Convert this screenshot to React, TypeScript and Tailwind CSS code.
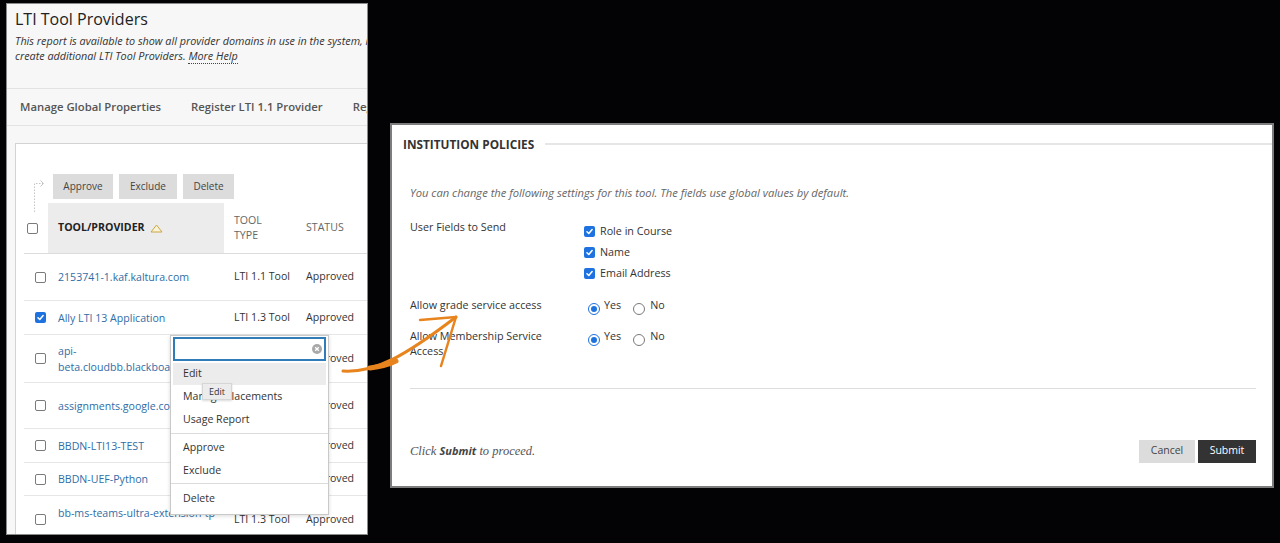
import React from "react";

type Row = {
  name: string;
  type: string;
  h: string;
  checked?: boolean;
  top?: boolean;
};

const rows: Row[] = [
  { name: "2153741-1.kaf.kaltura.com", type: "LTI 1.1 Tool", h: "h-[47px]" },
  { name: "Ally LTI 13 Application", type: "LTI 1.3 Tool", h: "h-[34px]", checked: true },
  { name: "api-beta.cloudbb.blackboard.com", type: "LTI 1.3 Tool", h: "h-[48px]" },
  { name: "assignments.google.com", type: "LTI 1.3 Tool", h: "h-[46px]" },
  { name: "BBDN-LTI13-TEST", type: "LTI 1.3 Tool", h: "h-[34px]" },
  { name: "BBDN-UEF-Python", type: "LTI 1.3 Tool", h: "h-[33px]" },
  { name: "bb-ms-teams-ultra-extension-tp", type: "LTI 1.3 Tool", h: "h-[48px]", top: true },
];

function Check({ checked = false }: { checked?: boolean }) {
  if (checked) {
    return (
      <span className="flex h-[11px] w-[11px] items-center justify-center rounded-[2px] bg-[#1d72e0]">
        <svg viewBox="0 0 10 10" className="h-[9px] w-[9px]">
          <path d="M2.2 5.3 4.2 7.2 7.9 2.9" fill="none" stroke="white" strokeWidth="1.7" strokeLinecap="round" strokeLinejoin="round" />
        </svg>
      </span>
    );
  }
  return <span className="block h-[11px] w-[11px] rounded-[2px] border border-[#7a7a7a] bg-white" />;
}

function Radio({ on = false }: { on?: boolean }) {
  return on ? (
    <span className="flex h-[12px] w-[12px] items-center justify-center rounded-full border-[1.5px] border-[#1d72e0] bg-white">
      <span className="h-[6px] w-[6px] rounded-full bg-[#1d72e0]" />
    </span>
  ) : (
    <span className="block h-[12px] w-[12px] rounded-full border border-[#7a7a7a] bg-white" />
  );
}

function YesNo() {
  return (
    <div className="flex items-start leading-[15px]">
      <span className="ml-[4px] mt-[5px]">
        <Radio on />
      </span>
      <span className="ml-[4px]">Yes</span>
      <span className="ml-[12px] mt-[5px]">
        <Radio />
      </span>
      <span className="ml-[5px]">No</span>
    </div>
  );
}

function ProvidersPanel() {
  return (
    <div className="ml-[6px] mt-[3px] h-[532px] w-[362px] shrink-0 overflow-hidden border border-[#8a8a8a] bg-[#f7f7f7]">
      <div className="h-[84px] pl-[8px] pt-[4px]">
        <h1 className="whitespace-nowrap text-[16px] leading-[22px] text-[#222]">LTI Tool Providers</h1>
        <div className="mt-[3px] whitespace-nowrap text-[10.8px] italic leading-[15px] text-[#333]">
          <p>This report is available to show all provider domains in use in the system, including those added by instructors. You can also</p>
          <p>
            create additional LTI Tool Providers.{" "}
            <span className="border-b border-dotted border-[#444]">More Help</span>
          </p>
        </div>
      </div>

      <div className="flex h-[38px] items-center gap-[30px] whitespace-nowrap border-y border-[#e3e3e3] pl-[13px] text-[11.3px] font-semibold text-[#555]">
        <span>Manage Global Properties</span>
        <span>Register LTI 1.1 Provider</span>
        <span>Register LTI 1.3/Advantage Tool</span>
      </div>

      <div className="ml-[8px] mt-[17px] h-[420px] w-[420px] border border-[#d3d3d3] bg-white text-[10.6px] text-[#333]">
        <div className="mt-[30px] flex h-[25px] items-start pl-[16px]">
          <svg viewBox="0 0 14 34" className="mr-[7px] mt-[5px] h-[34px] w-[14px] shrink-0">
            <path d="M2.5 33V4.5H11" fill="none" stroke="#c4c4c4" strokeWidth="1" strokeDasharray="1.5 1.5" />
            <path d="M8.5 1.5 11.5 4.5 8.5 7.5" fill="none" stroke="#c4c4c4" strokeWidth="1" />
          </svg>
          <div className="flex gap-[6px] text-[10px] text-[#444]">
            <button className="h-[25px] w-[60px] bg-[#dcdcdc]">Approve</button>
            <button className="h-[25px] w-[58px] bg-[#dcdcdc]">Exclude</button>
            <button className="h-[25px] w-[51px] bg-[#dcdcdc]">Delete</button>
          </div>
        </div>

        <div className="ml-[8px] mt-[4px] flex h-[51px] items-stretch border-b border-[#dcdcdc] text-[10.6px]">
          <div className="flex w-[24px] items-center pl-[3px]">
            <Check />
          </div>
          <div className="flex w-[176px] items-center gap-[5px] bg-[#ececec] pl-[10px] font-bold text-[#222]">
            TOOL/PROVIDER
            <svg viewBox="0 0 13 9" className="h-[9px] w-[13px]">
              <path d="M6.5 1 12 8H1Z" fill="#fbf3d6" stroke="#c9a548" strokeWidth="1" strokeLinejoin="round" />
            </svg>
          </div>
          <div className="flex w-[72px] items-center pl-[10px] leading-[15px] text-[#666]">
            TOOL
            <br />
            TYPE
          </div>
          <div className="flex items-center pl-[10px] text-[#666]">STATUS</div>
        </div>

        {rows.map((r) => (
          <div key={r.name} className={`ml-[8px] flex items-center border-b border-[#e6e6e6] ${r.h}`}>
            <div className="w-[24px] pl-[11px]">
              <Check checked={r.checked} />
            </div>
            <div
              className={`w-[176px] break-words px-[10px] leading-[16px] text-[#2f6da6] ${
                r.top ? "self-start whitespace-nowrap pt-[9px]" : ""
              }`}
            >
              {r.name}
            </div>
            <div className="w-[72px] whitespace-nowrap pl-[10px]">{r.type}</div>
            <div className="pl-[10px]">Approved</div>
          </div>
        ))}
      </div>
    </div>
  );
}

function PoliciesPanel() {
  return (
    <div className="ml-[22px] mt-[123px] h-[365px] w-[884px] shrink-0 border-2 border-[#7d7d7d] bg-white text-[10.75px] text-[#333]">
      <div className="flex items-center pl-[11px] pt-[11px]">
        <h2 className="text-[11.8px] font-bold leading-[16px] text-[#333]">INSTITUTION POLICIES</h2>
        <div className="ml-[11px] h-[2px] flex-1 bg-[#e6e6e6]" />
      </div>

      <div className="pl-[18px] pr-[16px]">
        <p className="mt-[33px] text-[11.2px] italic leading-[16px] text-[#666]">
          You can change the following settings for this tool. The fields use global values by default.
        </p>

        <div className="mt-[18px] flex">
          <div className="w-[174px] leading-[16px]">User Fields to Send</div>
          <div className="flex flex-col pt-[1.5px]">
            {["Role in Course", "Name", "Email Address"].map((f) => (
              <label key={f} className="flex h-[21px] items-center gap-[5px]">
                <Check checked />
                {f}
              </label>
            ))}
          </div>
        </div>

        <div className="mt-[14px] flex">
          <div className="w-[174px] leading-[15px]">Allow grade service access</div>
          <YesNo />
        </div>

        <div className="mt-[14px] flex">
          <div className="w-[174px] pr-[30px] leading-[15px]">Allow Membership Service Access</div>
          <YesNo />
        </div>

        <div className="mt-[29px] h-[1px] bg-[#dddddd]" />

        <div className="mt-[51px] flex items-center justify-between">
          <p className="font-['Liberation_Serif',serif] text-[12.5px] italic text-[#555]">
            Click <span className="font-['Open_Sans',sans-serif] text-[11px] font-bold text-[#444]">Submit</span> to proceed.
          </p>
          <div className="flex gap-[3px] text-[10.5px]">
            <button className="h-[23px] w-[56px] bg-[#dcdcdc] text-[#444]">Cancel</button>
            <button className="h-[23px] w-[58px] bg-[#333333] text-white">Submit</button>
          </div>
        </div>
      </div>
    </div>
  );
}

export default function App() {
  return (
    <div className="relative flex h-[543px] w-[1280px] items-start overflow-hidden bg-[#030205] font-['Open_Sans',sans-serif]">
      <ProvidersPanel />
      <PoliciesPanel />

      {/* action menu opened on a row */}
      <div className="absolute left-[170px] top-[335px] w-[159px] border border-[#c9c9c9] bg-white pb-[4px] text-[10.6px] text-[#333] shadow-[0_1px_4px_rgba(0,0,0,0.15)]">
        <div className="px-[2px] pt-[1px]">
          <div className="flex h-[24px] items-center justify-end border-2 border-[#2f7cb8] pr-[2px]">
            <svg viewBox="0 0 10 10" className="h-[10px] w-[10px]">
              <circle cx="5" cy="5" r="5" fill="#a9a9a9" />
              <path d="M3.2 3.2 6.8 6.8M6.8 3.2 3.2 6.8" stroke="white" strokeWidth="1.3" />
            </svg>
          </div>
        </div>
        <div className="px-[2px] pt-[2px]">
          <div className="flex h-[22px] items-center bg-[#ececec] pl-[10px]">Edit</div>
          <div className="flex h-[23px] items-center pl-[10px]">Manage Placements</div>
          <div className="flex h-[23px] items-center pl-[10px]">Usage Report</div>
        </div>
        <div className="mt-[2px] border-t border-[#dcdcdc] px-[2px] pt-[2px]">
          <div className="flex h-[23px] items-center pl-[10px]">Approve</div>
          <div className="flex h-[23px] items-center pl-[10px]">Exclude</div>
        </div>
        <div className="mt-[1px] border-t border-[#dcdcdc] px-[2px] pt-[3px]">
          <div className="flex h-[23px] items-center pl-[10px]">Delete</div>
        </div>
      </div>

      {/* hover tooltip */}
      <div className="absolute left-[202px] top-[383px] flex h-[17px] w-[30px] items-center justify-center border border-[#d6d6d6] bg-[#ececec] text-[9px] text-[#333] shadow-[0_1px_2px_rgba(0,0,0,0.15)]">
        Edit
      </div>

      {/* hand-drawn orange arrow */}
      <svg viewBox="330 300 140 80" className="pointer-events-none absolute left-[330px] top-[300px] h-[80px] w-[140px]">
        <path d="M343 371 C 375 373, 405 356, 456 317" fill="none" stroke="#e8841e" strokeWidth="3" strokeLinecap="round" />
        <path d="M370 368 C 378 367, 388 365, 396 361" fill="none" stroke="#e8841e" strokeWidth="5" strokeLinecap="round" />
        <path d="M456 317 L 420 320" fill="none" stroke="#e8841e" strokeWidth="2.5" strokeLinecap="round" />
        <path d="M456 317 L 441 366" fill="none" stroke="#e8841e" strokeWidth="2.5" strokeLinecap="round" />
      </svg>
    </div>
  );
}
